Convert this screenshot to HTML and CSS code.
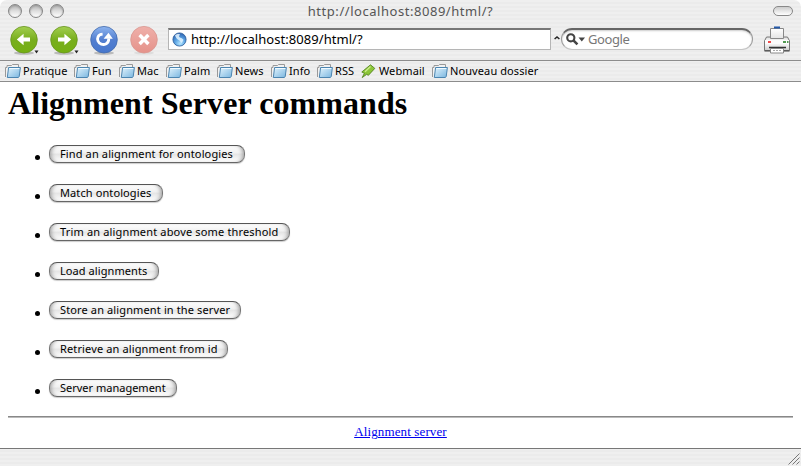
FILE: index.html
```html
<!DOCTYPE html>
<html lang="en">
<head>
<meta charset="utf-8">
<title>http://localhost:8089/html/?</title>
<link rel="stylesheet" href="styles.css">
</head>
<body>
<svg class="defs" width="0" height="0" aria-hidden="true">
  <defs>
    <linearGradient id="green" x1="0" y1="0" x2="0" y2="1"><stop offset="0" stop-color="#a3cf50"/><stop offset=".5" stop-color="#78ae1d"/><stop offset="1" stop-color="#75b012"/></linearGradient>
    <linearGradient id="blue" x1="0" y1="0" x2="0" y2="1"><stop offset="0" stop-color="#8db4ef"/><stop offset=".5" stop-color="#537fd0"/><stop offset="1" stop-color="#4777cd"/></linearGradient>
    <linearGradient id="red" x1="0" y1="0" x2="0" y2="1"><stop offset="0" stop-color="#efb0aa"/><stop offset="1" stop-color="#e5928a"/></linearGradient>
    <linearGradient id="folder" x1="0" y1="0" x2="1" y2="1"><stop offset="0" stop-color="#e3f4fd"/><stop offset="1" stop-color="#78b5df"/></linearGradient>
    <linearGradient id="paper" x1="0" y1="0" x2="0" y2="1"><stop offset="0" stop-color="#fff"/><stop offset="1" stop-color="#e4e4e4"/></linearGradient>
    <linearGradient id="case" x1="0" y1="0" x2="0" y2="1"><stop offset="0" stop-color="#ddd"/><stop offset=".4" stop-color="#fff"/><stop offset="1" stop-color="#ccc"/></linearGradient>
    <radialGradient id="globe" cx=".55" cy=".8" r=".8"><stop offset="0" stop-color="#b4e6ff"/><stop offset=".5" stop-color="#5aa2e2"/><stop offset="1" stop-color="#2a5fae"/></radialGradient>
    <symbol id="i-folder" viewBox="0 0 16 15">
      <path d="M.5 13V3.500h1.500v-2h4.500l1-1H13.500V4" fill="#f1f1f1" stroke="#999"/>
      <path d="M3.600 3.500h11.800l-1.200 9.200-1 .8H2.300z" fill="url(#folder)" stroke="#4c85b0"/>
      <path d="M4.400 4.500h9.900" stroke="#f1faff"/>
    </symbol>
  </defs>
</svg>
<div class="window">
  <header class="titlebar">
    <div class="lights"><i class="light"></i><i class="light"></i><i class="light"></i></div>
    <div class="title">http://localhost:8089/html/?</div>
    <i class="pill"></i>
  </header>
  <nav class="toolbar">
    <div class="controls">
      <svg width="32" height="32" viewBox="0 0 32 32"><ellipse cx="14" cy="28" rx="10" ry="1.800" fill="#bbb"/><circle cx="14" cy="14.700" r="13.300" fill="url(#green)" stroke="#67941d" stroke-width=".8"/><path d="M6.800 14.500l6.800-5.800v3.800H20v4h-6.400v3.800z" fill="#fff"/><path d="M24.500 25.500h4l-2 3z" fill="#222"/></svg>
      <svg width="32" height="32" viewBox="0 0 32 32"><ellipse cx="14" cy="28" rx="10" ry="1.800" fill="#bbb"/><circle cx="14" cy="14.700" r="13.300" fill="url(#green)" stroke="#67941d" stroke-width=".8"/><path d="M21.200 14.500l-6.800-5.800v3.800H8v4h6.400v3.800z" fill="#fff"/><path d="M24.500 25.500h4l-2 3z" fill="#222"/></svg>
      <svg width="32" height="32" viewBox="0 0 32 32"><ellipse cx="14" cy="28" rx="10" ry="1.800" fill="#bbb"/><circle cx="14" cy="14.700" r="13.300" fill="url(#blue)" stroke="#436bad" stroke-width=".8"/><path d="M12.600 9.200C7.500 9.600 7 13.500 8 16c1.200 3 5 4.200 7.800 3 2.200-1 3-3 3-5.500" fill="none" stroke="#fff" stroke-width="2.800"/><path d="M13.600 13.800l4.900-6 4.300 6z" fill="#fff"/></svg>
      <svg width="32" height="32" viewBox="0 0 32 32"><ellipse cx="14" cy="28" rx="10" ry="1.600" fill="#ddd"/><circle cx="14" cy="14.700" r="13.300" fill="url(#red)" stroke="#d99790" stroke-width=".8"/><path d="M9.600 10l8.800 9M18.400 10l-8.800 9" stroke="#fff" stroke-width="3.400"/></svg>
    </div>
    <div class="address">
      <svg width="15" height="15" viewBox="0 0 15 15"><circle cx="7.500" cy="7.500" r="6.600" fill="url(#globe)" stroke="#2c5d9b" stroke-width=".8"/><path d="M3 3.600c1.500-1.700 4-1.800 5-1.100C7.500 3.500 6.500 4 7.500 5.200c1.200.6 2.500.7 4 2.600C11 9 10.500 10.500 9.200 11 8.200 9.500 8 8.700 6.600 8 5 7.500 4.200 6 3 3.600z" fill="#e4f5ff" opacity=".85"/></svg>
      <span>http://localhost:8089/html/?</span>
    </div>
    <svg class="caret" width="6" height="5" viewBox="0 0 6 5"><path d="M.6 4L3 2 5.400 4" fill="none" stroke="#222" stroke-width="1.500"/></svg>
    <div class="search">
      <svg width="20" height="13" viewBox="0 0 20 13"><circle cx="4.800" cy="4.800" r="3.600" fill="none" stroke="#444" stroke-width="2.100"/><path d="M7.400 7.400l4 4" stroke="#444" stroke-width="2.600"/><path d="M12.500 4.500h6.500L15.800 8.500z" fill="#444"/></svg>
      <span>Google</span>
    </div>
    <svg class="printer" width="28" height="28" viewBox="0 0 28 28">
      <path d="M3.500 11h21L26.500 15v9.500h-25V15z" fill="url(#case)" stroke="#777"/>
      <path d="M7.500 2.500h13v10h-13z" fill="url(#paper)" stroke="#888"/>
      <path d="M11 1.500h6" stroke="#2459a8" stroke-width="2"/>
      <path d="M2 14h24v4H2z" fill="#fcfcfc"/>
      <path d="M1.500 25h25" stroke="#444"/>
      <path d="M5 16h3" stroke="#e11" stroke-width="1.400"/><path d="M20 16h3M24 16h1.500" stroke="#187818" stroke-width="1.400"/>
      <path d="M6 21.500h17" stroke="#333" stroke-width="1.600"/><path d="M7.500 22.500h13v4.500h-13z" fill="#fff" stroke="#888"/><path d="M10 24.500h9" stroke="#aaa" stroke-dasharray="2 1"/>
    </svg>
  </nav>
  <nav class="bookmarks">
    <a class="bm pratique"><svg width="16" height="15"><use href="#i-folder"/></svg><span>Pratique</span></a>
    <a class="bm fun"><svg width="16" height="15"><use href="#i-folder"/></svg><span>Fun</span></a>
    <a class="bm mac"><svg width="16" height="15"><use href="#i-folder"/></svg><span>Mac</span></a>
    <a class="bm palm"><svg width="16" height="15"><use href="#i-folder"/></svg><span>Palm</span></a>
    <a class="bm news"><svg width="16" height="15"><use href="#i-folder"/></svg><span>News</span></a>
    <a class="bm info"><svg width="16" height="15"><use href="#i-folder"/></svg><span>Info</span></a>
    <a class="bm rss"><svg width="16" height="15"><use href="#i-folder"/></svg><span>RSS</span></a>
    <a class="bm webmail"><svg width="15" height="15" viewBox="0 0 15 15"><path d="M9.500.8l4.300 3.600-6.500 7-1.500-1.200-4.600 3.400 2.200-4.300L.8 8z" fill="#8cc638" stroke="#568422" stroke-width=".9"/><path d="M9.500 2.500L4 7.800" stroke="#cdec8c" stroke-width="1.300"/></svg><span>Webmail</span></a>
    <a class="bm nouveau"><svg width="16" height="15"><use href="#i-folder"/></svg><span>Nouveau dossier</span></a>
  </nav>
  <main class="page">
    <h1>Alignment Server commands</h1>
    <ul class="commands">
      <li><button class="find">Find an alignment for ontologies</button></li>
      <li><button class="match">Match ontologies</button></li>
      <li><button class="trim">Trim an alignment above some threshold</button></li>
      <li><button class="load">Load alignments</button></li>
      <li><button class="store">Store an alignment in the server</button></li>
      <li><button class="retrieve">Retrieve an alignment from id</button></li>
      <li><button class="manage">Server management</button></li>
    </ul>
    <hr>
    <div class="foot"><a href="#">Alignment server</a></div>
  </main>
  <footer class="status"><svg width="12" height="12" viewBox="0 0 12 12"><path d="M.5 11.500l11-11M4.500 11.500l7-7M8.500 11.500l3-3" stroke="#777"/></svg></footer>
</div>
</body>
</html>
```

FILE: styles.css
```css
* { box-sizing: border-box; }
body { margin: 0; background: #fff; font-family: "Noto Sans", "Open Sans", sans-serif; color: #000; overflow: hidden; }
svg { display: block; flex: none; }
.defs { position: absolute; }
.window {
  width: 801px; height: 466px; display: flex; flex-direction: column;
  border-radius: 7px 7px 0 0; overflow: hidden;
  background: repeating-linear-gradient(#efefef 0 2px, #ebebeb 2px 4px);
}
.titlebar { height: 22px; display: grid; grid-template-columns: 60px 1fr 60px; align-items: center; padding: 0 8px; flex: none; }
.lights { display: flex; gap: 7px; }
.light { width: 14px; height: 14px; border-radius: 50%; border: 1px solid #858585; background: linear-gradient(#b5b5b5, #dedede 50%, #fff); box-shadow: inset 0 1px 2px #999; }
.title { text-align: center; font-size: 13px; line-height: 22px; color: #555; letter-spacing: .54px; }
.pill { justify-self: end; width: 20px; height: 10px; border: 1.500px solid #888; border-radius: 5px; background: linear-gradient(#ccc, #fff); }
.toolbar { height: 39px; flex: none; display: flex; align-items: flex-start; border-bottom: 1px solid #8c8c8c; padding: 3px 8px 0 10px; }
.controls { display: flex; gap: 8px; width: 158px; }
.address { width: 383px; height: 22px; margin-top: 3px; background: #fff; border: 1px solid #b5b5b5; border-top: 2px solid #777; display: flex; align-items: center; padding: 0 3px 1px; gap: 4px; font-size: 13px; line-height: 18px; }
.address span { letter-spacing: .05px; }
.caret { margin: 10px 1px 0 3px; }
.search { width: 192px; height: 22px; margin-top: 3px; border: 1px solid #9b9b9b; border-top: 2px solid #666; border-bottom-color: #c5c5c5; border-radius: 11px; background: #fff; box-shadow: inset 0 1px 2px #ccc; display: flex; align-items: center; padding: 0 0 1px 4px; gap: 2px; color: #777; font-size: 13px; letter-spacing: -.4px; line-height: 18px; }
.printer { margin: 1px 0 0 10px; }
.bookmarks { height: 21px; flex: none; display: flex; align-items: center; padding-left: 5px; border-bottom: 1px solid #8c8c8c; font-size: 11px; line-height: 20px; letter-spacing: .1px; white-space: nowrap; }
.bm { display: flex; gap: 2px; align-items: center; flex: none; }
.pratique { width: 69px; } .fun { width: 45px; } .mac { width: 47px; } .palm { width: 51px; }
.news { width: 54px; } .info { width: 46px; } .rss { width: 44px; } .webmail { width: 71px; gap: 3px; }
.page { background: #fff; height: 366px; flex: none; padding: 0 8px; overflow: hidden; font-family: "Liberation Serif", serif; }
h1 { margin: 3px 0 0; font-size: 32px; line-height: 37px; font-weight: bold; letter-spacing: .07px; }
.commands { list-style: none; margin: 23px 0 0 27px; padding: 0; display: grid; gap: 21px; }
.commands li { height: 18px; display: flex; align-items: center; gap: 9px; }
.commands li::before { content: ""; width: 5px; height: 5px; border-radius: 50%; background: #000; margin-top: 7px; }
.commands button {
  height: 18px; padding: 0 0 0 10px; border: 1px solid #777; border-top-color: #555; border-bottom-color: #666; border-radius: 8px;
  background: linear-gradient(#fdfdfd, #f0f0f0 45%, #e4e4e4 50%, #fff);
  box-shadow: inset 4px 0 4px -3px #999, inset -4px 0 4px -3px #999, 0 1px 1px #ccc;
  font: 11px/16px "Noto Sans", "Open Sans", sans-serif; letter-spacing: .13px; color: #000; white-space: nowrap; text-align: left;
}
.commands .find { width: 196px; }
.commands .match { width: 114px; letter-spacing: .1px; }
.commands .trim { width: 241px; letter-spacing: .16px; }
.commands .load { width: 110px; letter-spacing: .08px; }
.commands .store { width: 192px; }
.commands .retrieve { width: 179px; }
.commands .manage { width: 128px; letter-spacing: 0; }
hr { margin: 19px 0 0; height: 2px; border: 0; border-top: 1px solid #888; border-bottom: 1px solid #bbb; }
.foot { text-align: center; font-size: 13px; line-height: 15px; margin-top: 6px; letter-spacing: .13px; }
.foot a { color: #00e; }
.status { flex: 1; border-top: 1px solid #777; display: flex; justify-content: flex-end; align-items: flex-end; padding: 0 1px 1px 0; }
```
